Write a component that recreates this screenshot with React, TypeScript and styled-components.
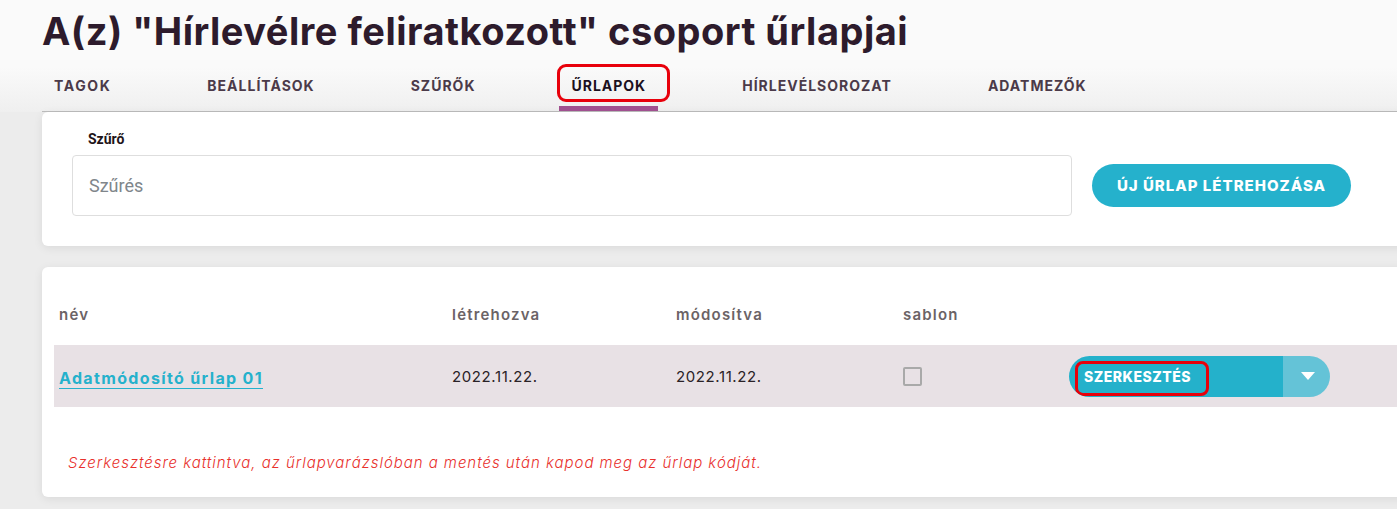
import { createGlobalStyle, styled } from "styled-components";

const GlobalStyle = createGlobalStyle`
  html, body {
    margin: 0;
    padding: 0;
    background: #ececec;
    overflow: hidden;
  }
  body {
    font-family: "Inter", "Noto Sans", sans-serif;
  }
  * {
    box-sizing: border-box;
  }
`;

const Page = styled.div`
  width: 1397px;
  height: 509px;
  overflow: hidden;
`;

const Header = styled.div`
  padding: 8px 0 0 42px;
  background: linear-gradient(#fafafa 60%, #efefef);
`;

const Title = styled.h1`
  margin: 0;
  font-size: 38px;
  line-height: 46px;
  font-weight: 700;
  color: #2d1b2c;
  letter-spacing: 0.5px;
`;

const Tabs = styled.div`
  display: flex;
  gap: 72px;
  margin-top: 11px;
  border-bottom: 1px solid #bdbdbd;
`;

const Tab = styled.div<{ $active?: boolean }>`
  position: relative;
  padding: 0 12px 1px;
  height: 46px;
  display: flex;
  align-items: center;
  font-size: 14px;
  font-weight: 700;
  letter-spacing: 1px;
  color: ${(p) => (p.$active ? "#1b1020" : "#4b3a49")};
  border-bottom: 5px solid ${(p) => (p.$active ? "#a0508f" : "transparent")};

  &:first-child {
    letter-spacing: 1.6px;
  }
`;

const Mark = styled.span<{ $inset: string; $radius: number }>`
  position: absolute;
  inset: ${(p) => p.$inset};
  border: 3px solid #e8000b;
  border-radius: ${(p) => p.$radius}px;
  pointer-events: none;
`;

const Content = styled.div`
  padding-left: 42px;
  margin-right: -30px;
  display: flex;
  flex-direction: column;
  gap: 21px;
`;

const Card = styled.div`
  background: #fff;
  border-radius: 6px;
  box-shadow: 0 2px 10px rgba(0, 0, 0, 0.08);
`;

const FilterCard = styled(Card)`
  padding: 19px 0 30px 30px;
  display: flex;
  align-items: flex-end;
  gap: 20px;
`;

const Field = styled.div`
  display: flex;
  flex-direction: column;
  width: 1000px;
`;

const Label = styled.label`
  font-family: "Roboto", sans-serif;
  font-size: 14px;
  font-weight: 700;
  color: #1e1418;
  padding-left: 16px;
  margin-bottom: 8px;
`;

const Input = styled.input`
  height: 61px;
  border: 1px solid #dedede;
  border-radius: 4px;
  padding: 0 16px;
  font-family: "Roboto", sans-serif;
  font-size: 18px;
  color: #333;
  outline: none;
  &::placeholder {
    color: #80868b;
  }
`;

const PrimaryButton = styled.button`
  height: 43px;
  width: 259px;
  margin-bottom: 9px;
  border: none;
  border-radius: 22px;
  background: #25b1cc;
  color: #fff;
  font-family: "Inter", sans-serif;
  font-size: 15px;
  font-weight: 800;
  letter-spacing: 1px;
`;

const TableCard = styled(Card)`
  padding: 32px 0 0 12px;
  height: 230px;
`;

const Row = styled.div<{ $head?: boolean }>`
  display: grid;
  grid-template-columns: 393px 224px 227px 166px 1fr;
  align-items: center;
  padding-left: 5px;
  height: ${(p) => (p.$head ? "30px" : "62px")};
  margin-top: ${(p) => (p.$head ? "0" : "16px")};
  background: ${(p) => (p.$head ? "transparent" : "#e8e1e5")};
`;

const HeadCell = styled.div`
  font-size: 15px;
  font-weight: 600;
  letter-spacing: 1.2px;
  color: #6b6366;
`;

const Cell = styled.div`
  font-size: 15px;
  letter-spacing: 0.6px;
  color: #2a2226;
`;

const NameLink = styled.a`
  justify-self: start;
  font-size: 16px;
  font-weight: 700;
  letter-spacing: 1.35px;
  color: #25b1cc;
  text-decoration: none;
  border-bottom: 1px solid #25b1cc;
  line-height: 20px;
  margin-top: 4px;
`;

const Checkbox = styled.span`
  width: 19px;
  height: 19px;
  border: 2px solid #a9a9a9;
  border-radius: 2px;
`;

const SplitButton = styled.div`
  display: flex;
  width: 261px;
  height: 41px;
  border-radius: 21px;
  overflow: hidden;
`;

const SplitMain = styled.button`
  position: relative;
  flex: 0 0 214px;
  border: none;
  background: #24b1cb;
  color: #fff;
  text-align: left;
  padding-left: 15px;
  font-family: "Inter", sans-serif;
  font-size: 14px;
  font-weight: 800;
  letter-spacing: 0.5px;
`;

const SplitToggle = styled.button`
  flex: 1;
  border: none;
  background: #64c3d7;
  display: flex;
  align-items: center;
  justify-content: center;
  padding-right: 4px;
`;

const Note = styled.p`
  margin: 46px 0 0 14px;
  font-size: 15px;
  font-style: italic;
  font-weight: 300;
  letter-spacing: 0.95px;
  color: #e8302c;
`;

const tabs = ["TAGOK", "BEÁLLÍTÁSOK", "SZŰRŐK", "ŰRLAPOK", "HÍRLEVÉLSOROZAT", "ADATMEZŐK"];

export default function App() {
  return (
    <Page>
      <GlobalStyle />
      <Header>
        <Title>A(z) "Hírlevélre feliratkozott" csoport űrlapjai</Title>
        <Tabs>
          {tabs.map((t) => (
            <Tab key={t} $active={t === "ŰRLAPOK"}>
              {t}
              {t === "ŰRLAPOK" && <Mark $inset="-1px -12px 4px -2px" $radius={9} />}
            </Tab>
          ))}
        </Tabs>
      </Header>
      <Content>
        <FilterCard>
          <Field>
            <Label>Szűrő</Label>
            <Input placeholder="Szűrés" />
          </Field>
          <PrimaryButton>ÚJ ŰRLAP LÉTREHOZÁSA</PrimaryButton>
        </FilterCard>
        <TableCard>
          <Row $head>
            <HeadCell>név</HeadCell>
            <HeadCell>létrehozva</HeadCell>
            <HeadCell>módosítva</HeadCell>
            <HeadCell>sablon</HeadCell>
            <div />
          </Row>
          <Row>
            <NameLink href="#">Adatmódosító űrlap 01</NameLink>
            <Cell>2022.11.22.</Cell>
            <Cell>2022.11.22.</Cell>
            <Checkbox />
            <SplitButton>
              <SplitMain>
                SZERKESZTÉS
                <Mark $inset="5px 74px 1px 6px" $radius={8} />
              </SplitMain>
              <SplitToggle>
                <svg width="14" height="8" viewBox="0 0 14 8">
                  <path d="M0 0 L14 0 L7 8 Z" fill="#fff" />
                </svg>
              </SplitToggle>
            </SplitButton>
          </Row>
          <Note>Szerkesztésre kattintva, az űrlapvarázslóban a mentés után kapod meg az űrlap kódját.</Note>
        </TableCard>
      </Content>
    </Page>
  );
}
